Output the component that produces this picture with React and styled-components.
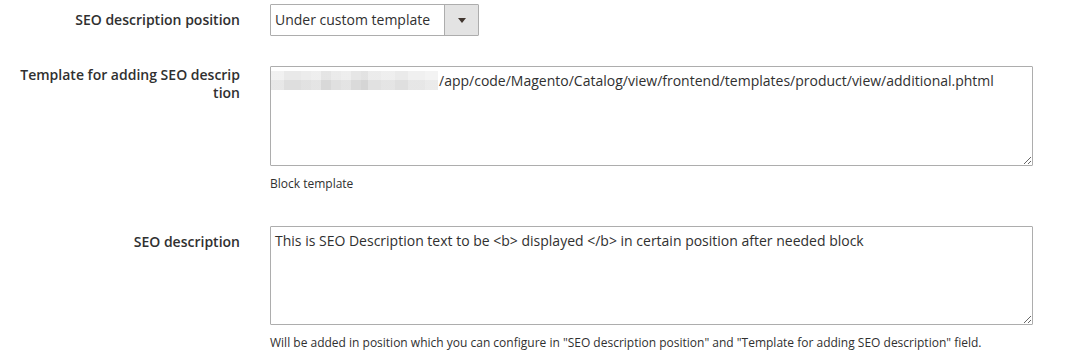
import React from "react";
import styled, { createGlobalStyle } from "styled-components";

const GlobalStyle = createGlobalStyle`
  html, body { margin: 0; padding: 0; background: #ffffff; }
  body { font-family: "Open Sans", "Noto Sans", Arial, sans-serif; color: #303030; }
`;

const Form = styled.div`
  display: flex;
  flex-direction: column;
  gap: 30px;
  padding-top: 4px;
  width: 1065px;
`;

const Row = styled.div`
  display: flex;
  align-items: flex-start;
  gap: 30px;
`;

const Label = styled.label`
  box-sizing: border-box;
  width: 240px;
  padding-left: 20px;
  padding-top: ${(p) => p.$top}px;
  text-align: right;
  font-size: 14px;
  font-weight: 600;
  line-height: 18px;
  color: #303030;
  word-break: break-all;
  flex-shrink: 0;
`;

const Control = styled.div`
  display: flex;
  flex-direction: column;
  width: 763px;
`;

const SelectBox = styled.div`
  box-sizing: border-box;
  display: flex;
  width: 209px;
  height: 32px;
  border: 1px solid #adadad;
  border-radius: 1px;
  background: #ffffff;
`;

const SelectValue = styled.span`
  flex: 1;
  padding: 0 4px;
  font-size: 14px;
  line-height: 30px;
  color: #303030;
  white-space: nowrap;
`;

const SelectArrow = styled.span`
  width: 33px;
  display: flex;
  align-items: center;
  justify-content: center;
  background: #e3e3e3;
  border-left: 1px solid #adadad;
  &::after {
    content: "";
    border-left: 4px solid transparent;
    border-right: 4px solid transparent;
    border-top: 5px solid #41362f;
    margin-top: 1px;
  }
`;

const FieldWrap = styled.div`
  position: relative;
  width: 763px;
`;

const TextArea = styled.textarea`
  box-sizing: border-box;
  display: block;
  width: 763px;
  height: ${(p) => p.$height}px;
  margin: 0;
  padding: 4px 4px;
  border: 1px solid #adadad;
  border-radius: 1px;
  font-family: "Open Sans", "Noto Sans", Arial, sans-serif;
  font-size: 14px;
  line-height: 20px;
  color: #303030;
  background: #ffffff;
  text-indent: ${(p) => p.$indent || 0}px;
  resize: vertical;
  outline: none;
`;

const Redaction = styled.span`
  position: absolute;
  left: 1px;
  top: 5px;
  width: 167px;
  height: 19px;
  background:
    linear-gradient(180deg, rgba(255,255,255,0.25) 0 45%, rgba(0,0,0,0.02) 45% 100%),
    linear-gradient(90deg,
      #ececec 0 8%, #e2e2e2 8% 18%, #e6e6e6 18% 24%, #e9e9e9 24% 30%,
      #dcdcdc 30% 36%, #e4e4e4 36% 42%, #e8e8e8 42% 48%, #dedede 48% 54%,
      #d9d9d9 54% 58%, #e5e5e5 58% 66%, #e9e9e9 66% 74%, #e3e3e3 74% 82%,
      #ebebeb 82% 92%, #efefef 92% 100%);
`;

const Note = styled.div`
  margin-top: ${(p) => p.$top}px;
  font-size: 12px;
  line-height: 24px;
  color: #303030;
  white-space: nowrap;
`;

export default function App() {
  return (
    <>
      <GlobalStyle />
      <Form>
        <Row>
          <Label $top={7}>SEO description position</Label>
          <Control>
            <SelectBox>
              <SelectValue>Under custom template</SelectValue>
              <SelectArrow />
            </SelectBox>
          </Control>
        </Row>
        <Row>
          <Label $top={0}>Template for adding SEO description</Label>
          <Control>
            <FieldWrap>
              <TextArea
                $height={100}
                $indent={164}
                readOnly
                value="/app/code/Magento/Catalog/view/frontend/templates/product/view/additional.phtml"
              />
              <Redaction />
            </FieldWrap>
            <Note $top={6}>Block template</Note>
          </Control>
        </Row>
        <Row>
          <Label $top={7}>SEO description</Label>
          <Control>
            <TextArea
              $height={99}
              readOnly
              value="This is SEO Description text to be <b> displayed </b> in certain position after needed block"
            />
            <Note $top={6}>
              Will be added in position which you can configure in "SEO description position" and "Template for adding SEO description" field.
            </Note>
          </Control>
        </Row>
      </Form>
    </>
  );
}
